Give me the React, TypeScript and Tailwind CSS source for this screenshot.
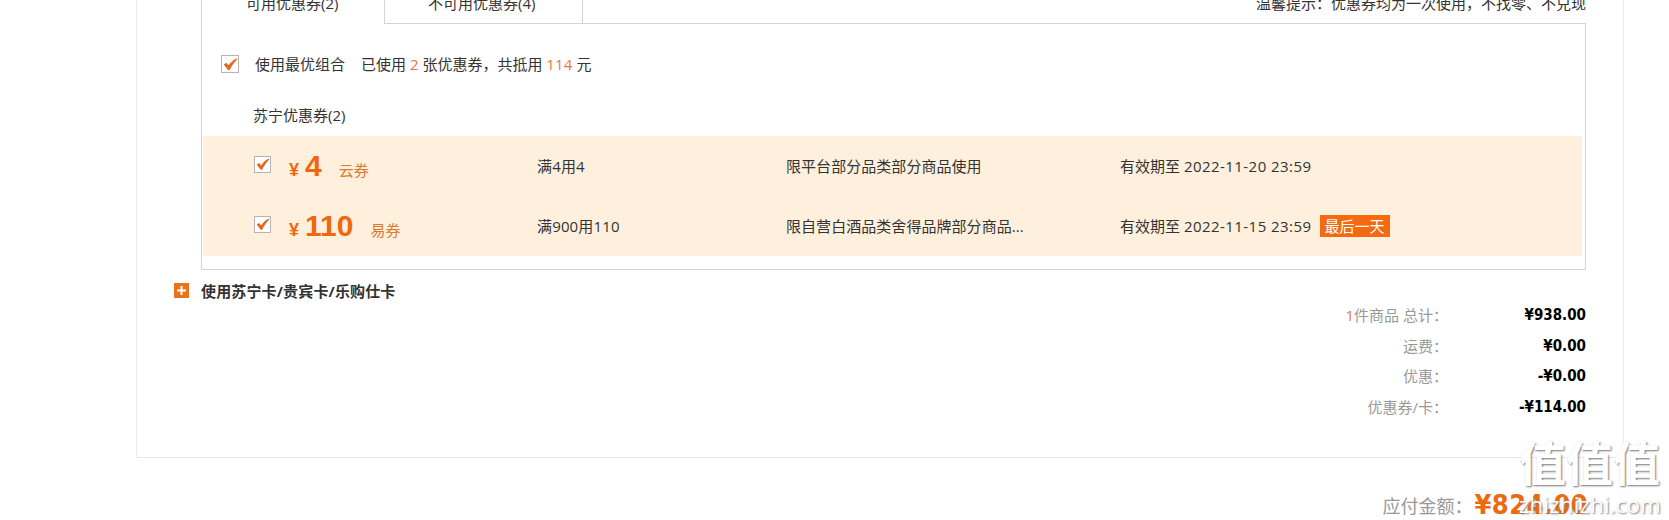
import clsx from "clsx";

type Coupon = {
  amount: string;
  kind: string;
  rule: string;
  scope: string;
  expires: string;
  lastDay?: boolean;
};

const COUPONS: Coupon[] = [
  { amount: "4", kind: "云券", rule: "满4用4", scope: "限平台部分品类部分商品使用", expires: "2022-11-20 23:59" },
  { amount: "110", kind: "易券", rule: "满900用110", scope: "限自营白酒品类舍得品牌部分商品...", expires: "2022-11-15 23:59", lastDay: true },
];

const TOTALS = [
  { count: "1", label: "件商品 总计：", value: "¥938.00" },
  { label: "运费：", value: "¥0.00" },
  { label: "优惠：", value: "-¥0.00" },
  { label: "优惠券/卡：", value: "-¥114.00" },
];

function CheckBox({ large }: { large?: boolean }) {
  return (
    <span
      className={clsx(
        "flex shrink-0 items-center justify-center border border-[#b4b4b4] bg-white",
        large ? "size-[18px]" : "size-[17px]"
      )}
    >
      <svg viewBox="0 0 16 16" className="size-4" aria-hidden="true">
        <path d="M1.8 8.6 L4.2 6.8 L6.6 9.2 C8.8 6.4 11.4 3.8 14.8 2.2 L15 3.4 C12 6.6 9.6 10 7.6 14 L6 14 Z" fill="#e4691f" />
      </svg>
    </span>
  );
}

function CouponRow({ coupon }: { coupon: Coupon }) {
  return (
    <li className="flex h-[60px] items-center pl-[51px]">
      <div className="flex w-[283px] items-center">
        <span className="mb-1">
          <CheckBox />
        </span>
        <div className="flex items-baseline pl-[18px] text-[#f2660d]">
          <span className="w-[16px] font-['Liberation_Sans'] text-[18px] font-bold">¥</span>
          <span className="font-['Liberation_Sans'] text-[30px] leading-[34px] font-bold">{coupon.amount}</span>
          <span className="pl-[17px] text-[#dc7a2c]">{coupon.kind}</span>
        </div>
      </div>
      <span className="w-[249px] tracking-[0.15px]">{coupon.rule}</span>
      <span className="w-[334px] tracking-[0.05px]">{coupon.scope}</span>
      <span>
        有效期至 <span className="tracking-[0.45px]">{coupon.expires}</span>
      </span>
      {coupon.lastDay && (
        <span className="ml-2 h-[22px] bg-[#f5690f] px-[5px] leading-[22px] text-white">最后一天</span>
      )}
    </li>
  );
}

export default function App() {
  return (
    <div className="relative h-[520px] w-[1669px] overflow-hidden bg-white font-['Open_Sans','Noto_Sans_CJK_SC',sans-serif] text-[15px] leading-5 font-[380] whitespace-nowrap text-[#333]">
      <main className="ml-[136px] h-[458px] w-[1488px] border-x border-b border-[#e8e8e8]">
        <div className="ml-[64px] w-[1385px]">
          <div className="flex h-[23px] border-l border-[#d4d4d4]">
            <div className="-mt-[7px] w-[182px] pl-[44px]">可用优惠券(2)</div>
            <div className="w-[199px] border-x border-[#d4d4d4] pl-[43px]">
              <div className="-mt-[7px]">不可用优惠券(4)</div>
            </div>
            <div className="-mt-[7px] flex-1 text-right">温馨提示：优惠券均为一次使用，不找零、不兑现</div>
          </div>

          <section className="h-[247px] border-x border-b border-[#d4d4d4]">
            <div className="ml-[182px] h-px bg-[#d4d4d4]" />
            <div className="flex h-[80px] items-center pl-[19px]">
              <CheckBox large />
              <span className="pl-4">使用最优组合</span>
              <span className="pl-4">
                已使用 <b className="font-normal text-[#ee7440]">2</b> 张优惠券，共抵用{" "}
                <b className="font-normal tracking-[0.2px] text-[#ee7440]">114</b> 元
              </span>
            </div>
            <h2 className="mt-px h-[31px] pl-[51px]">苏宁优惠券(2)</h2>
            <ul className="ml-px w-[1379px] bg-[#fef0dc]">
              {COUPONS.map((c) => (
                <CouponRow key={c.kind} coupon={c} />
              ))}
            </ul>
          </section>
        </div>

        <div className="flex h-[31px] items-end pl-[37px]">
          <span className="mb-[3px] flex size-[15px] items-center justify-center bg-[#e8731a]">
            <svg viewBox="0 0 9 9" className="size-[9px]" aria-hidden="true">
              <path d="M4.5 0V9M0 4.5H9" stroke="#fff" strokeWidth="2" />
            </svg>
          </span>
          <span className="pl-3 font-bold tracking-[0.15px]">使用苏宁卡/贵宾卡/乐购仕卡</span>
        </div>

        <dl className="-mt-px mr-[37px]">
          {TOTALS.map((t) => (
            <div key={t.label} className="flex h-[30.6px] items-center justify-end">
              <dt className="text-[#999]">
                {t.count && <span className="font-normal text-[#ee7440]">{t.count}</span>}
                {t.label}
              </dt>
              <dd className="w-[138px] text-right font-['DejaVu_Sans'] font-bold text-black font-stretch-semi-condensed">
                {t.value}
              </dd>
            </div>
          ))}
        </dl>
      </main>

      <footer className="flex h-[62px] items-center justify-end pt-8 pr-[81px]">
        <span className="mr-[2px] pt-0.5 text-[18px] text-[#999]">应付金额：</span>
        <strong className="font-['DejaVu_Sans'] text-[27px] leading-7 font-bold tracking-[0.4px] text-[#ee6a10] font-stretch-semi-condensed">
          ¥824.00
        </strong>
      </footer>

      {/* site watermark */}
      <div className="absolute top-[434px] left-[1519px] w-[145px] text-white [text-shadow:1px_1px_2px_#777]">
        <div className="text-[47px] leading-[58px] font-bold">值值值</div>
        <div className="text-[22px] leading-6 font-normal tracking-[0.3px]">zhizhizhi.com</div>
      </div>
    </div>
  );
}
